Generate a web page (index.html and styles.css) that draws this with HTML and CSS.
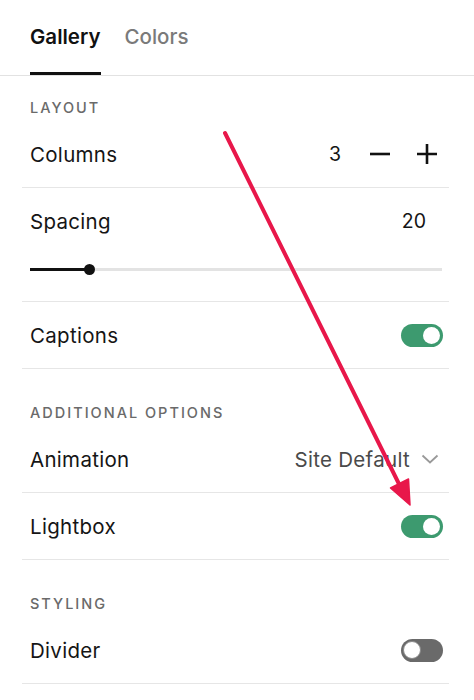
FILE: index.html
```html
<!DOCTYPE html>
<html>
<head>
<meta charset="utf-8">
<link rel="stylesheet" href="styles.css">
</head>
<body>
<div class="panel">
  <nav class="tabs">
    <div class="tab active">Gallery</div>
    <div class="tab">Colors</div>
  </nav>

  <section class="section first">
    <div class="sec-title">LAYOUT</div>
    <div class="row">
      <span class="label">Columns</span>
      <div class="stepper">
        <span class="val">3</span>
        <svg class="step-icon" width="22" height="22" viewBox="0 0 22 22"><path d="M1 11H21" stroke="#111" stroke-width="2.6"/></svg>
        <svg class="step-icon" width="22" height="22" viewBox="0 0 22 22"><path d="M1 11H21M11 1V21" stroke="#111" stroke-width="2.6"/></svg>
      </div>
    </div>
    <div class="row tall">
      <div class="row-top">
        <span class="label">Spacing</span>
        <span class="val">20</span>
      </div>
      <div class="slider">
        <div class="fill" style="width:59px"></div>
        <div class="knob"></div>
      </div>
    </div>
    <div class="row">
      <span class="label">Captions</span>
      <span class="toggle on"><span class="dot"></span></span>
    </div>
  </section>

  <section class="section">
    <div class="sec-title">ADDITIONAL OPTIONS</div>
    <div class="row">
      <span class="label">Animation</span>
      <div class="select">
        <span class="sel-text">Site Default</span>
        <svg width="18" height="10" viewBox="0 0 18 10"><path d="M1.5 1.5L9 8.5L16.5 1.5" fill="none" stroke="#999" stroke-width="1.8"/></svg>
      </div>
    </div>
    <div class="row">
      <span class="label">Lightbox</span>
      <span class="toggle on"><span class="dot"></span></span>
    </div>
  </section>

  <section class="section">
    <div class="sec-title">STYLING</div>
    <div class="row">
      <span class="label">Divider</span>
      <span class="toggle off"><span class="dot"></span></span>
    </div>
  </section>

  <svg class="arrow" width="474" height="700" viewBox="0 0 474 700">
    <line x1="225" y1="133" x2="400" y2="486" stroke="#e8174a" stroke-width="4" stroke-linecap="round"/>
    <polygon points="410,505 408.5,479 390.5,488" fill="#e8174a" stroke="#e8174a" stroke-width="1.5" stroke-linejoin="round"/>
  </svg>
</div>
</body>
</html>
```
FILE: styles.css
```css
html, body {
  margin: 0;
  padding: 0;
  background: #fff;
}
body {
  font-family: Inter, "Liberation Sans", Arial, sans-serif;
  color: #151515;
}
.panel {
  position: relative;
  width: 474px;
  height: 700px;
  overflow: hidden;
}
.tabs {
  display: flex;
  gap: 24px;
  padding: 0 30px;
  height: 75px;
  border-bottom: 1px solid #e2e2e2;
  box-sizing: content-box;
}
.tab {
  font-size: 20.5px;
  font-weight: 500;
  color: #7a7a7a;
  display: flex;
  align-items: center;
  height: 72px;
  border-bottom: 3px solid transparent;
}
.tab.active {
  color: #111;
  font-weight: 600;
  border-bottom-color: #111;
}
.section {
  margin: 12px 25px 0 22px;
}
.section.first {
  margin-top: 0;
}
.sec-title {
  font-size: 14.5px;
  letter-spacing: 2px;
  font-weight: 500;
  color: #6a6a6a;
  line-height: 16px;
  padding: 24px 8px 5px;
}
.row {
  height: 66px;
  border-bottom: 1.5px solid #e6e6e6;
  display: flex;
  align-items: center;
  justify-content: space-between;
  padding: 0 6px 0 8px;
}
.row.tall {
  height: 113px;
  flex-direction: column;
  align-items: stretch;
  justify-content: flex-start;
  padding-right: 7px;
}
.row-top {
  height: 66px;
  display: flex;
  align-items: center;
  justify-content: space-between;
  padding-right: 16px;
}
.label {
  font-size: 20.5px;
  letter-spacing: 0.3px;
}
.val {
  font-size: 19.5px;
}
.stepper {
  display: flex;
  align-items: center;
  gap: 0;
  padding-right: 5px;
}
.stepper .val {
  margin-right: 28px;
}
.stepper .step-icon + .step-icon {
  margin-left: 25px;
}
.slider {
  position: relative;
  height: 3px;
  background: #e3e3e3;
  margin-top: 14px;
  margin-right: 0;
}
.slider .fill {
  height: 3px;
  background: #111;
}
.slider .knob {
  position: absolute;
  left: 54px;
  top: -4px;
  width: 11px;
  height: 11px;
  border-radius: 50%;
  background: #111;
}
.toggle {
  width: 42px;
  height: 23px;
  border-radius: 12px;
  display: flex;
  align-items: center;
  box-sizing: border-box;
  padding: 0 3px;
}
.toggle.on {
  background: #3d9a6f;
  justify-content: flex-end;
}
.toggle.off {
  background: #6a6a6a;
  justify-content: flex-start;
  padding: 0 2px;
}
.toggle .dot {
  width: 17px;
  height: 17px;
  border-radius: 50%;
  background: #fff;
}
.toggle.off .dot {
  width: 18px;
  height: 18px;
  border: 1.5px solid #8a8a8a;
  box-sizing: border-box;
}
.select {
  display: flex;
  align-items: center;
  gap: 11px;
  padding-right: 4px;
}
.sel-text {
  font-size: 20.5px;
  letter-spacing: 0.3px;
  color: #4a4a4a;
}
.arrow {
  position: absolute;
  left: 0;
  top: 0;
  pointer-events: none;
}
```
